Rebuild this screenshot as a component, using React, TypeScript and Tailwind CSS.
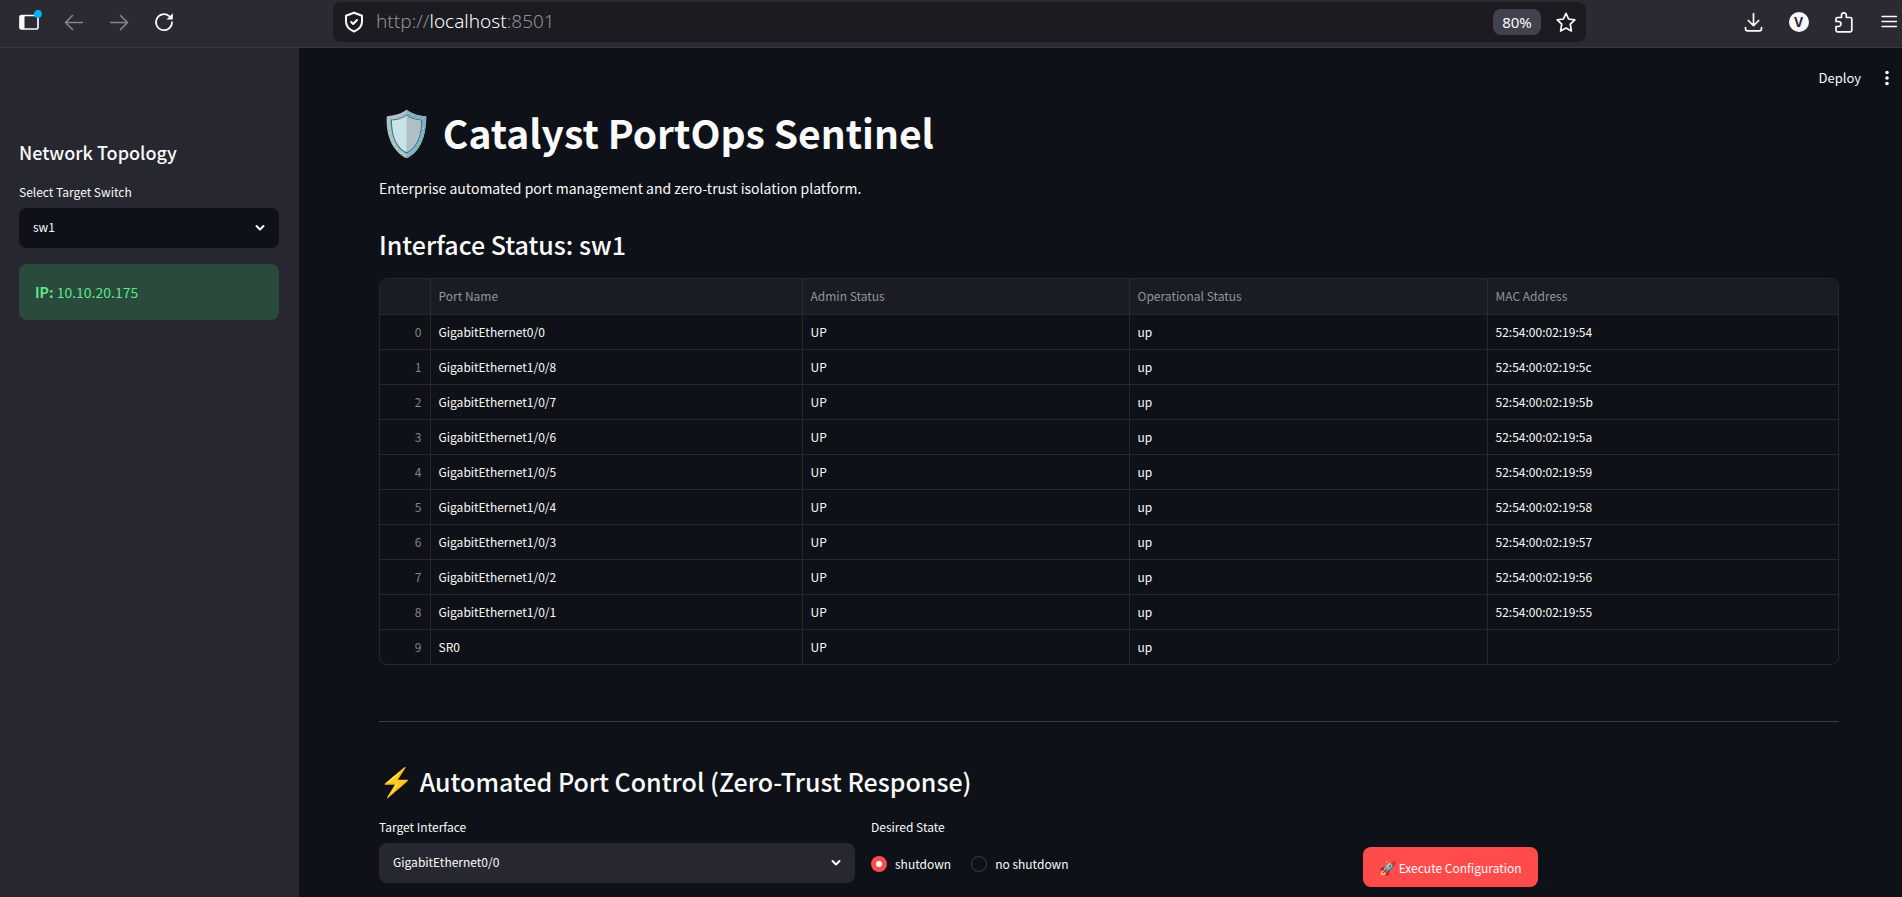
import type { ReactNode } from 'react';

const rows: [string, string, string, string][] = [
  ['GigabitEthernet0/0', 'UP', 'up', '52:54:00:02:19:54'],
  ['GigabitEthernet1/0/8', 'UP', 'up', '52:54:00:02:19:5c'],
  ['GigabitEthernet1/0/7', 'UP', 'up', '52:54:00:02:19:5b'],
  ['GigabitEthernet1/0/6', 'UP', 'up', '52:54:00:02:19:5a'],
  ['GigabitEthernet1/0/5', 'UP', 'up', '52:54:00:02:19:59'],
  ['GigabitEthernet1/0/4', 'UP', 'up', '52:54:00:02:19:58'],
  ['GigabitEthernet1/0/3', 'UP', 'up', '52:54:00:02:19:57'],
  ['GigabitEthernet1/0/2', 'UP', 'up', '52:54:00:02:19:56'],
  ['GigabitEthernet1/0/1', 'UP', 'up', '52:54:00:02:19:55'],
  ['SR0', 'UP', 'up', ''],
];

function ToolButton({ label, children, className = '' }: { label: string; children: ReactNode; className?: string }) {
  return (
    <button type="button" aria-label={label} className={`flex h-6 w-6 shrink-0 items-center justify-center ${className}`}>
      {children}
    </button>
  );
}

function BrowserBar() {
  return (
    <div className="flex h-12 shrink-0 items-center border-b border-[#38373f] bg-[#2b2a33] pb-1 text-[#fbfbfe]">
      <div className="flex w-[333px] shrink-0 items-center gap-[21px] pl-[17px]">
        <ToolButton label="Sidebar">
          <svg width="26" height="24" viewBox="0 0 26 24" fill="none" className="shrink-0">
            <rect x="4" y="5.500" width="18" height="13.500" rx="1.500" stroke="currentColor" strokeWidth="1.700" />
            <path d="M4 5.500h4.500V19H4z" fill="currentColor" />
            <circle cx="22" cy="4" r="3.900" fill="#00b3f4" />
          </svg>
        </ToolButton>
        <ToolButton label="Back" className="text-[#85848b]">
          <svg width="20" height="20" viewBox="0 0 20 20" fill="none" stroke="currentColor" strokeWidth="1.600" strokeLinecap="round" strokeLinejoin="round">
            <path d="M18.500 10.500H1.800M8.500 3.500L1.500 10.500L8.500 17.500" />
          </svg>
        </ToolButton>
        <ToolButton label="Forward" className="text-[#85848b]">
          <svg width="20" height="20" viewBox="0 0 20 20" fill="none" stroke="currentColor" strokeWidth="1.600" strokeLinecap="round" strokeLinejoin="round">
            <path d="M1.500 10.500H18.200M11.500 3.500L18.500 10.500L11.500 17.500" />
          </svg>
        </ToolButton>
        <ToolButton label="Reload">
          <svg width="20" height="20" viewBox="0 0 20 20" fill="none">
            <path d="M18 10.200a8 8 0 1 1-2.800-6.100L17 5.700" stroke="currentColor" strokeWidth="1.700" strokeLinecap="round" />
            <path d="M18.800 1.200v6.300h-6.300z" fill="currentColor" />
          </svg>
        </ToolButton>
      </div>

      <div className="flex h-10 w-[1253px] min-w-0 items-center rounded-lg bg-[#1c1b22] pl-[11px] pr-2">
        <svg width="20" height="22" viewBox="0 0 20 22" fill="none" stroke="currentColor" strokeWidth="2" strokeLinejoin="round" strokeLinecap="round" className="shrink-0">
          <path d="M10 1.800L18 4.800V10.500c0 4.500-3 8-8 10C5 18.500 2 15 2 10.500V4.800z" />
          <path d="M7.200 11l2 2L13 9" />
        </svg>
        <a href="http://localhost:8501" className="ml-3 flex-1 truncate font-['Noto_Sans','Open_Sans',sans-serif] text-[19px] font-light text-[#8f8f96]">
          http://<span className="text-[#fbfbfe]">localhost</span>:8501
        </a>
        <button type="button" className="h-[26px] w-12 rounded-lg bg-[#42414d] font-['Noto_Sans',sans-serif] text-[15px] leading-[26px]">80%</button>
        <ToolButton label="Bookmark" className="ml-[13px]">
          <svg width="22" height="22" viewBox="0 0 22 22" fill="none" stroke="currentColor" strokeWidth="1.700" strokeLinejoin="round">
            <path d="M11 2.300l2.600 5.700 6.200.8-4.500 4.400 1.100 6.800L11 17l-5.400 3 1.100-6.800L2.200 8.800l6.200-.8z" />
          </svg>
        </ToolButton>
      </div>

      <div className="ml-auto flex w-[160px] shrink-0 items-center justify-between">
        <ToolButton label="Downloads">
          <svg width="20" height="20" viewBox="0 0 20 20" fill="none" stroke="currentColor" strokeWidth="1.700" strokeLinecap="round" strokeLinejoin="round">
            <path d="M9.500 1.500v12M4.300 8.500L9.500 13.700l5.200-5.200M1.500 15.500v1.300a2 2 0 0 0 2 2h12a2 2 0 0 0 2-2v-1.300" />
          </svg>
        </ToolButton>
        <button type="button" className="h-5 w-5 rounded-full bg-[#fbfbfe] font-['Inter',sans-serif] text-[13px] font-bold leading-5 text-[#2b2a33]">V</button>
        <ToolButton label="Extensions">
          <svg width="22" height="22" viewBox="0 0 22 22" fill="none" stroke="currentColor" strokeWidth="1.700" strokeLinejoin="round" strokeLinecap="round">
            <path d="M4 10.500V8a1.500 1.500 0 0 1 1.500-1.500h4V4.200a2.400 2.400 0 0 1 4.800 0v2.300h4A1.500 1.500 0 0 1 19.800 8v11.300a1.500 1.500 0 0 1-1.500 1.500H5.500A1.500 1.500 0 0 1 4 19.300v-3.800h2.500a2.400 2.400 0 0 0 0-5z" />
          </svg>
        </ToolButton>
        <ToolButton label="Menu">
          <svg width="18" height="16" viewBox="0 0 18 16" stroke="currentColor" strokeWidth="1.400" strokeLinecap="round">
            <path d="M1 2.500h14.500M1 7.500h14.500M1 12.500h14.500" />
          </svg>
        </ToolButton>
      </div>
    </div>
  );
}

function SelectBox({ id, options, className }: { id: string; options: string[]; className: string }) {
  return (
    <div className="relative">
      <select id={id} className={`block h-10 w-full appearance-none rounded-lg px-[14px] pb-0.5 text-xs text-[#fafafa] ${className}`}>
        {options.map((o) => (
          <option key={o}>{o}</option>
        ))}
      </select>
      <svg width="10" height="8" viewBox="0 0 10 8" fill="none" stroke="#fafafa" strokeWidth="2" strokeLinecap="round" strokeLinejoin="round" className="pointer-events-none absolute right-[14px] top-4">
        <path d="M1.500 2L5 5.500L8.500 2" />
      </svg>
    </div>
  );
}

function Sidebar() {
  return (
    <aside className="w-[299px] shrink-0 bg-[#262730] pl-[19px] pr-5 pt-[90px]">
      <h3 className="text-lg font-medium">Network Topology</h3>
      <label htmlFor="switch" className="mb-1 mt-3.5 block text-xs leading-6">Select Target Switch</label>
      <SelectBox id="switch" options={['sw1']} className="bg-[#0e1117]" />
      <div className="mt-4 rounded-lg bg-[#2a4a3c] p-4 text-sm leading-6 text-[#5ce488]">
        <strong className="font-bold">IP:</strong> 10.10.20.175
      </div>
    </aside>
  );
}

function StatusTable() {
  return (
    <div className="overflow-hidden rounded-lg border border-[#26282e]">
      <table className="w-full table-fixed border-collapse text-left text-xs">
        <colgroup>
          <col className="w-[50px]" />
          <col className="w-[372px]" />
          <col className="w-[327px]" />
          <col className="w-[358px]" />
          <col />
        </colgroup>
        <thead>
          <tr className="h-[35px] bg-[#1a1c23] text-[#93959b]">
            <th aria-label="Index" />
            {['Port Name', 'Admin Status', 'Operational Status', 'MAC Address'].map((h) => (
              <th key={h} className="border-l border-[#2a2c33] px-2 font-normal">{h}</th>
            ))}
          </tr>
        </thead>
        <tbody>
          {rows.map((r, i) => (
            <tr key={r[0]} className="h-[35px] border-t border-[#26282e]">
              <td className="px-2 text-right text-[#84868c]">{i}</td>
              {r.map((c, j) => (
                <td key={j} className="border-l border-[#26282e] px-2">{c}</td>
              ))}
            </tr>
          ))}
        </tbody>
      </table>
    </div>
  );
}

function Radio({ label, checked }: { label: string; checked?: boolean }) {
  return (
    <label className="flex items-center gap-2 text-xs leading-6">
      <input
        type="radio"
        name="state"
        defaultChecked={checked}
        className="h-4 w-4 appearance-none rounded-full border border-[#3b3d45] checked:border-[5px] checked:border-[#ff4b4b] checked:bg-white"
      />
      {label}
    </label>
  );
}

export default function App() {
  return (
    <div className="flex h-screen flex-col overflow-hidden bg-[#0e1117] font-['Noto_Sans_CJK_SC',sans-serif] text-[#fafafa]">
      <BrowserBar />
      <div className="flex min-h-0 flex-1">
        <Sidebar />
        <main className="min-w-0 flex-1 overflow-hidden">
          <header className="flex h-[60px] items-center justify-end gap-[23px] pr-3 text-[13px]">
            <button type="button">Deploy</button>
            <button type="button" aria-label="Main menu">
              <svg width="6" height="16" viewBox="0 0 6 16" fill="#fafafa">
                <circle cx="3" cy="2.500" r="1.800" />
                <circle cx="3" cy="8" r="1.800" />
                <circle cx="3" cy="13.500" r="1.800" />
              </svg>
            </button>
          </header>
          <div className="pl-20 pr-[63px]">
            <h1 className="text-[39px] font-bold leading-[48px]">
              <span className="text-[44px] leading-none">🛡️</span> Catalyst PortOps Sentinel
            </h1>
            <p className="mt-5 text-sm leading-6">Enterprise automated port management and zero-trust isolation platform.</p>
            <h2 className="mb-4 mt-[26px] text-[25px] font-medium leading-9">Interface Status: sw1</h2>
            <StatusTable />
            <hr className="mb-[41px] mt-14 border-[#3b3d45]" />
            <h2 className="text-[25px] font-medium leading-9">
              <span className="text-[28px] leading-none">⚡</span> Automated Port Control (Zero-Trust Response)
            </h2>
            <div className="mt-4 grid grid-cols-3 gap-4">
              <div>
                <label htmlFor="iface" className="mb-1 block text-xs leading-6">Target Interface</label>
                <SelectBox id="iface" options={rows.map((r) => r[0])} className="bg-[#262730]" />
              </div>
              <fieldset>
                <legend className="mb-1 text-xs leading-6">Desired State</legend>
                <div className="flex h-[42px] items-center gap-5">
                  <Radio label="shutdown" checked />
                  <Radio label="no shutdown" />
                </div>
              </fieldset>
              <div className="pt-8">
                <button type="button" className="h-10 rounded-lg bg-[#ff4b4b] px-4 text-xs">
                  <span className="text-sm">🚀</span> Execute Configuration
                </button>
              </div>
            </div>
          </div>
        </main>
      </div>
    </div>
  );
}
